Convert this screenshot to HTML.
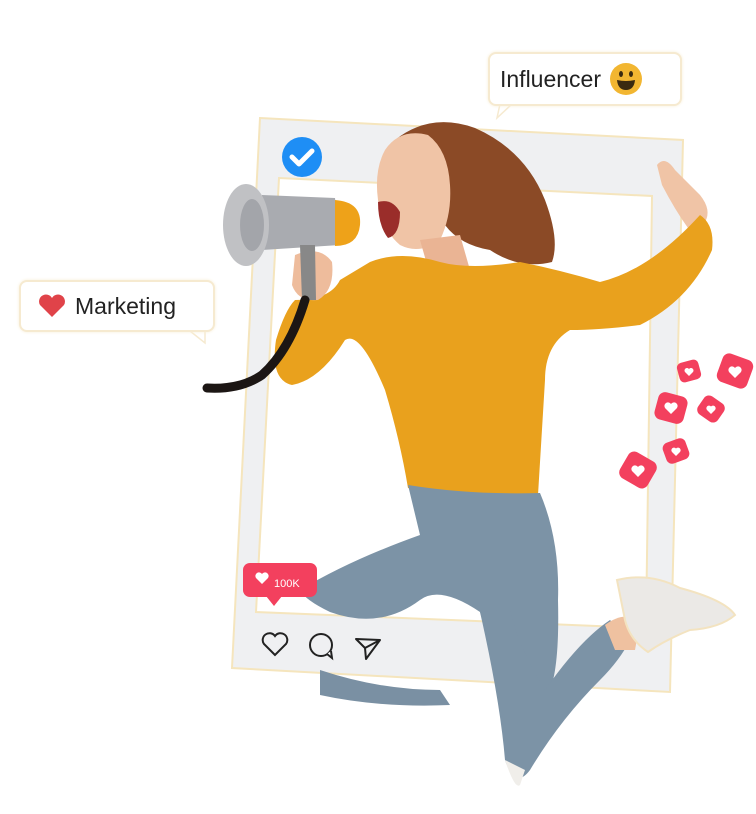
<!DOCTYPE html>
<html><head><meta charset="utf-8"><style>
html,body{margin:0;padding:0;background:#fff;width:756px;height:814px;overflow:hidden}
.lbl{position:absolute;background:#fff;border:2px solid #f6ead0;border-radius:8px;font-family:"Liberation Sans",sans-serif;font-size:23px;color:#222;display:flex;align-items:center;box-shadow:0 0 3px #f8efd8}
</style></head><body>
<svg width="756" height="814" viewBox="0 0 756 814" style="position:absolute;left:0;top:0">
<!-- frame -->
<path fill-rule="evenodd" fill="#eff0f2" stroke="#f5e5bd" stroke-width="2" d="M260 118 L683 140 L670 692 L232 668 Z M279 178 L652 196 L646 628 L256 612 Z"/>
<!-- verified badge -->
<circle cx="302" cy="157" r="20" fill="#1e8ef5"/>
<path d="M292 157 l7 7 l13 -13" stroke="#fff" stroke-width="5" fill="none" stroke-linecap="round" stroke-linejoin="round"/>
<!-- hair -->
<path fill="#8b4a26" d="M395 140 Q430 112 475 128 Q525 150 545 200 Q560 240 552 262 Q520 270 490 250 Q460 245 445 225 Q420 200 405 170 Z"/>
<!-- face -->
<path fill="#f0c4a6" d="M385 150 Q400 128 428 135 Q448 150 450 185 Q452 215 440 240 Q420 255 400 245 Q382 230 378 200 Q374 170 385 150 Z"/>
<path fill="#9a2d2a" d="M378 202 Q392 198 400 212 Q400 235 388 238 Q378 225 378 202 Z"/>
<!-- neck -->
<path fill="#eab494" d="M420 240 L460 235 L470 270 L430 275 Z"/>
<!-- right arm hand -->
<path fill="#f0c4a6" d="M657 165 Q665 155 675 170 L700 195 Q712 210 705 222 L688 228 Q675 210 662 185 Z"/>
<!-- sweater -->
<path fill="#e9a11d" d="M370 262 Q400 250 440 262 Q470 270 520 262 Q560 270 600 282 Q650 270 700 215 Q715 225 712 250 Q690 300 640 325 Q600 330 570 330 Q545 345 545 380 L538 495 Q480 500 408 488 Q400 440 385 390 Q360 330 345 340 Q320 380 292 385 Q270 380 276 340 Q285 310 295 300 Q330 300 340 280 Z"/>
<!-- hand holding -->
<path fill="#eebc9c" d="M295 255 Q320 245 332 262 Q335 290 318 300 Q298 302 292 285 Z"/>
<!-- megaphone -->
<path fill="#a9abb0" d="M262 195 L335 198 L340 245 L262 250 Z"/>
<path fill="#eea219" d="M335 200 Q362 202 360 225 Q358 246 335 246 Z"/>
<ellipse cx="246" cy="225" rx="23" ry="41" fill="#c0c1c4"/>
<ellipse cx="252" cy="225" rx="12" ry="26" fill="#a3a5aa"/>
<path fill="#888" d="M300 245 L315 245 L316 300 L302 300 Z"/>
<!-- cord -->
<path d="M305 300 Q290 350 262 375 Q240 390 207 388" stroke="#1c1614" stroke-width="9" fill="none" stroke-linecap="round"/>
<!-- jeans -->
<path fill="#7c93a6" d="M408 485 Q470 495 540 493 Q560 540 558 600 Q560 680 545 700 Q520 685 505 690 L480 612 Q440 585 420 600 Q380 630 330 612 Q305 600 300 590 Q350 560 420 535 Z"/>
<path fill="#7c93a6" d="M480 612 Q500 700 505 760 Q515 790 530 770 Q560 720 600 680 Q620 660 630 640 L610 620 Q580 640 545 690 Q520 650 510 610 Z"/>
<path fill="#7a90a3" d="M320 670 Q380 690 440 690 L450 705 Q380 708 320 695 Z"/>
<!-- ankle -->
<path fill="#efc1a0" d="M605 625 Q625 610 640 622 L635 650 L615 650 Z"/>
<!-- shoe -->
<path fill="#ebe9e6" stroke="#f3e3c0" stroke-width="2" d="M617 580 Q650 572 680 588 Q725 600 735 615 Q720 628 690 630 Q665 640 648 652 Q630 640 625 620 Z"/>
<path fill="#f0eeea" d="M505 760 Q515 790 520 785 L525 770 Z"/>
<!-- 100K badge -->
<rect x="243" y="563" width="74" height="34" rx="7" fill="#f3405e"/>
<path d="M266 596 L274 606 L282 596 Z" fill="#f3405e"/>
<path d="M262 584 l-6 -6 a3.5 3.5 0 0 1 6 -4 a3.5 3.5 0 0 1 6 4 Z" fill="#fff"/>
<text x="274" y="587" font-family="Liberation Sans,sans-serif" font-size="11" fill="#fff">100K</text>
<!-- action icons -->
<path d="M275 655 l-11 -11 a6 6 0 0 1 11 -8 a6 6 0 0 1 11 8 Z" fill="none" stroke="#222" stroke-width="2"/>
<circle cx="321" cy="645" r="11" fill="none" stroke="#222" stroke-width="2"/>
<path d="M327 654 l5 4 l-1 -7" fill="#fff" stroke="#222" stroke-width="2"/>
<path d="M356 639 L380 640 L366 659 L365 648 Z M365 648 L380 640" fill="none" stroke="#222" stroke-width="2" stroke-linejoin="round"/>
<!-- floating hearts -->
<g fill="#f3405e">
<rect x="678" y="361" width="22" height="20" rx="5" transform="rotate(-15 689 371)"/>
<rect x="719" y="356" width="32" height="30" rx="7" transform="rotate(20 735 371)"/>
<rect x="656" y="394" width="30" height="28" rx="7" transform="rotate(15 671 408)"/>
<rect x="699" y="398" width="24" height="22" rx="6" transform="rotate(35 711 409)"/>
<rect x="664" y="440" width="24" height="22" rx="6" transform="rotate(-20 676 451)"/>
<rect x="622" y="455" width="32" height="30" rx="7" transform="rotate(30 638 470)"/>
</g>
<g fill="#fff">
<path d="M689 376 l-4 -4 a2.4 2.4 0 0 1 4 -3 a2.4 2.4 0 0 1 4 3 Z"/>
<path d="M735 378 l-6 -6 a3.5 3.5 0 0 1 6 -4 a3.5 3.5 0 0 1 6 4 Z"/>
<path d="M671 414 l-6 -6 a3.5 3.5 0 0 1 6 -4 a3.5 3.5 0 0 1 6 4 Z"/>
<path d="M711 414 l-4 -4 a2.6 2.6 0 0 1 4 -3.5 a2.6 2.6 0 0 1 4 3.5 Z"/>
<path d="M676 456 l-4 -4 a2.6 2.6 0 0 1 4 -3.5 a2.6 2.6 0 0 1 4 3.5 Z"/>
<path d="M638 477 l-6 -6 a3.5 3.5 0 0 1 6 -4 a3.5 3.5 0 0 1 6 4 Z"/>
</g>
<!-- label tails -->
<path d="M190 331 L205 343 L205 331 Z" fill="#fff" stroke="#f6ead0" stroke-width="1.5"/>
<path d="M500 104 L497 118 L512 104 Z" fill="#fff" stroke="#f6ead0" stroke-width="1.5"/>
</svg>
<div class="lbl" style="left:19px;top:280px;width:192px;height:48px">
 <svg width="30" height="26" style="margin:0 8px 0 16px" viewBox="0 0 30 26"><path d="M15 24 L3 12 A6.5 6.5 0 0 1 15 5 A6.5 6.5 0 0 1 27 12 Z" fill="#e04349"/></svg>Marketing</div>
<div class="lbl" style="left:488px;top:52px;width:190px;height:50px">
 <span style="margin-left:10px">Influencer</span>
 <svg width="34" height="34" style="margin-left:8px" viewBox="0 0 34 34"><circle cx="17" cy="17" r="16" fill="#f2b631"/><ellipse cx="12" cy="12" rx="2" ry="3" fill="#3a2a10"/><ellipse cx="22" cy="12" rx="2" ry="3" fill="#3a2a10"/><path d="M8 18 Q17 20 26 18 Q25 28 17 28 Q9 28 8 18 Z" fill="#3a2a10"/></svg>
</div>
</body></html>
